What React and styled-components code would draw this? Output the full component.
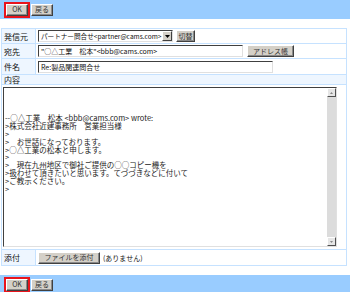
import React from 'react';
import styled, { createGlobalStyle } from 'styled-components';

const GlobalStyle = createGlobalStyle`
  html, body {
    margin: 0;
    padding: 0;
    background: #ffffff;
  }
  body {
    font-family: "Noto Sans CJK JP", "DejaVu Sans", sans-serif;
    font-size: 8px;
    color: #111;
  }
`;

const font = `"Noto Sans CJK JP", "DejaVu Sans", sans-serif`;

const Page = styled.div`
  width: 350px;
  height: 292px;
  overflow: hidden;
  display: flex;
  flex-direction: column;
`;

const ActionBar = styled.div`
  height: 19px;
  background: #99ccff;
  display: flex;
  align-items: center;
  gap: 1px;
  padding: 0 4px;
  box-sizing: border-box;
  flex-shrink: 0;
  margin-top: ${p => p.$top || 0}px;
`;

const RedFrame = styled.span`
  display: inline-flex;
  border: 2px solid #e8141c;
`;

const Button = styled.button`
  font-family: ${font};
  font-size: 7px;
  line-height: 1;
  white-space: nowrap;
  height: ${p => p.$h || 12}px;
  width: ${p => p.$w}px;
  padding: 0;
  margin: 0;
  background: #d4d0c8;
  color: #333;
  border: 1px solid;
  border-color: #ffffff #404040 #404040 #ffffff;
  box-shadow: inset -1px -1px 0 #8a8a8a;
  display: inline-flex;
  align-items: center;
  justify-content: center;
  cursor: pointer;
  flex-shrink: 0;
`;

const Form = styled.div`
  margin: 9px 3px 0 1px;
  border: 1px solid #c6e2ff;
`;

const Row = styled.div`
  display: grid;
  grid-template-columns: 34px 1fr;
  height: ${p => p.$h}px;
  border-bottom: 1px solid #c6e2ff;
  &:last-child {
    border-bottom: none;
  }
`;

const Label = styled.div`
  background: #eef6ff;
  border-right: 1px solid #c6e2ff;
  display: flex;
  align-items: center;
  padding-left: 2px;
  white-space: nowrap;
`;

const Value = styled.div`
  display: flex;
  align-items: center;
  gap: ${p => p.$gap || 3}px;
  padding-left: 2px;
`;

const HeaderRow = styled.div`
  background: #eef6ff;
  height: 9px;
  display: flex;
  align-items: center;
  padding-left: 2px;
  border-bottom: 1px solid #c6e2ff;
`;

const BodyRow = styled.div`
  padding: 2px 9px 2px 1px;
  border-bottom: 1px solid #c6e2ff;
`;

const Select = styled.div`
  width: 131px;
  height: 10px;
  border: 1px solid;
  border-color: #404040 #e0e0e0 #e0e0e0 #404040;
  display: flex;
  align-items: center;
  font-size: 6.6px;
  padding-left: 2px;
  box-sizing: content-box;
  overflow: hidden;
  white-space: nowrap;
`;

const SelectArrow = styled.span`
  margin-left: auto;
  width: 8px;
  height: 8px;
  background: #d4d0c8;
  border: 1px solid;
  border-color: #fff #404040 #404040 #fff;
  display: flex;
  align-items: center;
  justify-content: center;
  flex-shrink: 0;
`;

const Input = styled.input`
  width: ${p => p.$w}px;
  height: 10px;
  box-sizing: content-box;
  border: 1px solid;
  border-color: #404040 #e0e0e0 #e0e0e0 #404040;
  padding: 0 0 0 2px;
  margin: 0;
  font-family: ${font};
  font-size: 7px;
  color: #111;
  outline: none;
`;

const TextBox = styled.div`
  display: flex;
  height: 160px;
  border: 1px solid;
  border-color: #404040 #e0e0e0 #e0e0e0 #404040;
  box-sizing: border-box;
`;

const Body = styled.textarea`
  flex: 1;
  resize: none;
  margin: 0;
  padding: 3px 1px 0;
  border: none;
  font-family: ${font};
  font-size: 7.5px;
  line-height: 7.8px;
  color: #222;
  overflow: hidden;
  outline: none;
`;

const ScrollTrack = styled.div`
  width: 9px;
  background: #dcdcdc;
  display: flex;
  flex-direction: column;
  justify-content: space-between;
`;

const ScrollButton = styled.div`
  height: 9px;
  box-sizing: border-box;
  background: #e6e6e6;
  border: 1px solid;
  border-color: #fff #505050 #505050 #fff;
  display: flex;
  align-items: center;
  justify-content: center;
`;

const Note = styled.span`
  font-size: 7px;
`;

const message = `


--○△工業　松本 <bbb@cams.com> wrote:
>株式会社近建事務所　営業担当様
>
>　お世話になっております。
>○△工業の松本と申します。
>
>　現在九州地区で御社ご提供の○○コピー機を
>扱わせて頂きたいと思います。てづづきなどに付いて
>ご教示ください。
>`;

function Actions({ top }) {
  return (
    <ActionBar $top={top}>
      <RedFrame>
        <Button $w={22} $h={12}>OK</Button>
      </RedFrame>
      <Button $w={22} $h={12}>戻る</Button>
    </ActionBar>
  );
}

function Arrow({ up }) {
  return (
    <svg width="3" height="2" viewBox="0 0 3 2">
      <path d={up ? 'M0 2h3L1.5 0z' : 'M0 0h3L1.5 2z'} fill="#888" />
    </svg>
  );
}

export default function App() {
  return (
    <Page>
      <GlobalStyle />
      <Actions />
      <Form>
        <Row $h={14}>
          <Label>発信元</Label>
          <Value>
            <Select>
              パートナー問合せ&lt;partner@cams.com&gt;
              <SelectArrow>
                <svg width="5" height="3" viewBox="0 0 5 3">
                  <path d="M0 0h5L2.5 3z" fill="#000" />
                </svg>
              </SelectArrow>
            </Select>
            <Button $w={19}>切替</Button>
          </Value>
        </Row>
        <Row $h={14}>
          <Label>宛先</Label>
          <Value $gap={4}>
            <Input $w={201} defaultValue={'"○△工業　松本"<bbb@cams.com>'} />
            <Button $w={47}>アドレス帳</Button>
          </Value>
        </Row>
        <Row $h={15}>
          <Label>件名</Label>
          <Value>
            <Input $w={231} defaultValue="Re:製品関連問合せ" />
          </Value>
        </Row>
        <HeaderRow>内容</HeaderRow>
        <BodyRow>
          <TextBox>
            <Body defaultValue={message} />
            <ScrollTrack>
              <ScrollButton><Arrow up /></ScrollButton>
              <ScrollButton><Arrow /></ScrollButton>
            </ScrollTrack>
          </TextBox>
        </BodyRow>
        <Row $h={15}>
          <Label>添付</Label>
          <Value>
            <Button $w={62}>ファイルを添付</Button>
            <Note>(ありません)</Note>
          </Value>
        </Row>
      </Form>
      <Actions top={9} />
    </Page>
  );
}
